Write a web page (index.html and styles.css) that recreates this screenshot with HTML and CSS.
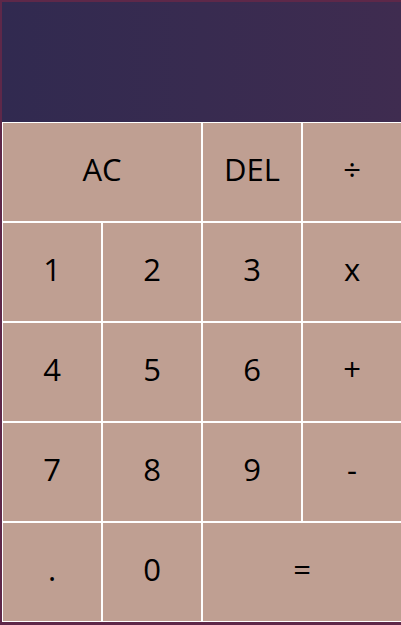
FILE: index.html
```html
<!DOCTYPE html>
<html>
<head>
<meta charset="utf-8">
<link rel="stylesheet" href="styles.css">
</head>
<body>
<div class="calculator">
  <div class="output"></div>
  <button class="key span-two">AC</button>
  <button class="key">DEL</button>
  <button class="key">÷</button>
  <button class="key">1</button>
  <button class="key">2</button>
  <button class="key">3</button>
  <button class="key">x</button>
  <button class="key">4</button>
  <button class="key">5</button>
  <button class="key">6</button>
  <button class="key">+</button>
  <button class="key">7</button>
  <button class="key">8</button>
  <button class="key">9</button>
  <button class="key">-</button>
  <button class="key">.</button>
  <button class="key">0</button>
  <button class="key span-two">=</button>
</div>
</body>
</html>
```
FILE: styles.css
```css
html, body {
  margin: 0;
  padding: 0;
  height: 100%;
  overflow: hidden;
}
body {
  background: #5e2849;
  font-family: "Open Sans", "Noto Sans", sans-serif;
}
.calculator {
  display: grid;
  grid-template-columns: repeat(4, 100px);
  grid-template-rows: 120px repeat(5, 100px);
  padding: 2px 0 0 2px;
  width: 400px;
}
.output {
  grid-column: 1 / -1;
  background: linear-gradient(to right, #312a50, #3f2c50);
}
.key {
  margin: 0;
  padding: 0 0 5px 0;
  border: 1px solid #ffffff;
  background: #bf9f92;
  color: #000000;
  font-family: "Open Sans", "Noto Sans", sans-serif;
  font-size: 31px;
  font-weight: 400;
  line-height: 1;
  cursor: pointer;
}
.span-two {
  grid-column: span 2;
}
```
